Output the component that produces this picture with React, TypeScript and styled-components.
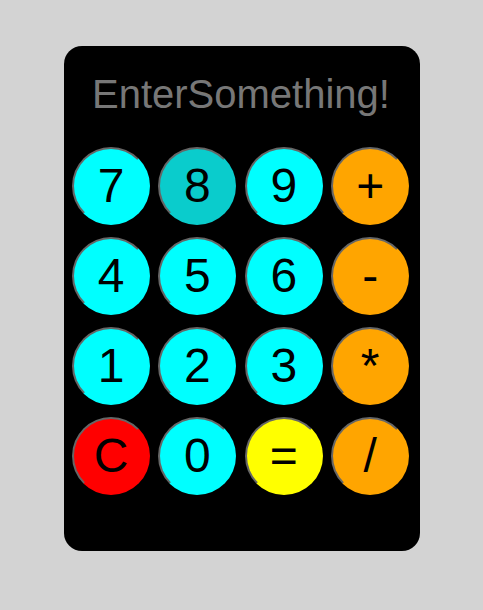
import React from "react";
import styled, { createGlobalStyle } from "styled-components";

const Global = createGlobalStyle`
  html, body { margin: 0; padding: 0; background: #d3d3d3; }
  body { font-family: "Liberation Sans", Arial, sans-serif; }
`;

const Page = styled.div`
  display: flex;
  justify-content: center;
  padding-top: 46px;
  padding-left: 1px;
`;

const Card = styled.div`
  box-sizing: border-box;
  width: 356px;
  height: 505px;
  background: #000;
  border-radius: 18px;
  padding: 26px 10px 0 8px;
`;

const Display = styled.h1`
  margin: 0;
  font-family: "Liberation Sans", Arial, sans-serif;
  font-weight: 400;
  font-size: 40px;
  line-height: 45px;
  color: #777777;
  text-align: center;
`;

const Keys = styled.div`
  display: grid;
  grid-template-columns: repeat(4, 78px);
  column-gap: 8.4px;
  row-gap: 12px;
  margin-top: 30px;
`;

type Tone = "digit" | "active" | "op" | "clear" | "equals";

const toneColor: Record<Tone, string> = {
  digit: "#00ffff",
  active: "#0acccc",
  op: "#ffa500",
  clear: "#ff0000",
  equals: "#ffff00",
};

const Key = styled.button<{ $tone: Tone }>`
  box-sizing: border-box;
  width: 78px;
  height: 78px;
  padding: 0;
  border-radius: 50%;
  border: 2px solid;
  border-color: #666666 transparent transparent #666666;
  background: ${(p) => toneColor[p.$tone]};
  color: #000;
  font-family: "Liberation Sans", Arial, sans-serif;
  font-size: 48px;
  line-height: 1;
  display: flex;
  align-items: center;
  justify-content: center;
  cursor: pointer;
`;

const keys: { label: string; tone: Tone }[] = [
  { label: "7", tone: "digit" },
  { label: "8", tone: "active" },
  { label: "9", tone: "digit" },
  { label: "+", tone: "op" },
  { label: "4", tone: "digit" },
  { label: "5", tone: "digit" },
  { label: "6", tone: "digit" },
  { label: "-", tone: "op" },
  { label: "1", tone: "digit" },
  { label: "2", tone: "digit" },
  { label: "3", tone: "digit" },
  { label: "*", tone: "op" },
  { label: "C", tone: "clear" },
  { label: "0", tone: "digit" },
  { label: "=", tone: "equals" },
  { label: "/", tone: "op" },
];

export default function App() {
  return (
    <>
      <Global />
      <Page>
        <Card>
          <Display>EnterSomething!</Display>
          <Keys>
            {keys.map((k) => (
              <Key key={k.label} $tone={k.tone}>
                {k.label}
              </Key>
            ))}
          </Keys>
        </Card>
      </Page>
    </>
  );
}
